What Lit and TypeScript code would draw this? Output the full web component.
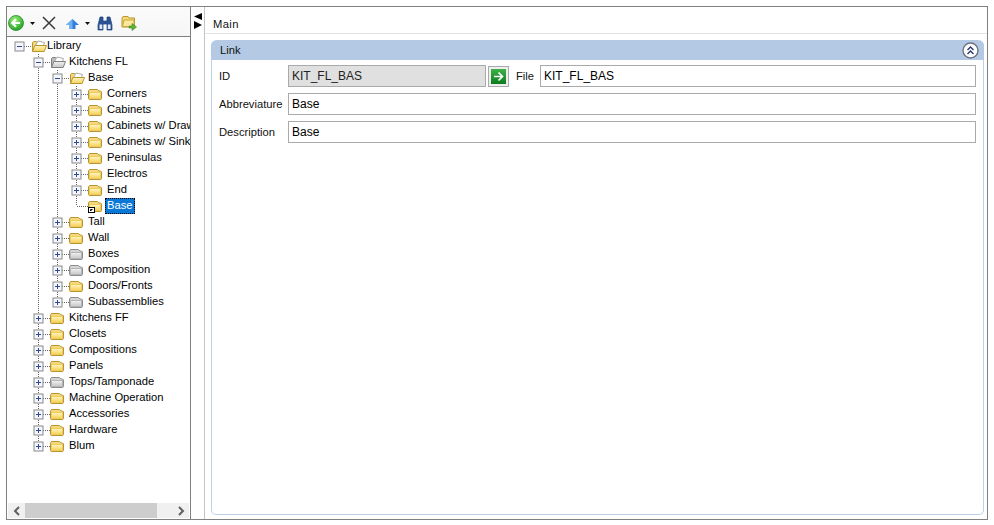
import { LitElement, html, css, svg } from "lit";
import { customElement } from "lit/decorators.js";

type Row = { d: number; t: string; s: "open" | "closed" | "leaf"; g?: boolean; sel?: boolean; last?: boolean };

const rows: Row[] = [
  { d: 0, t: "Library", s: "open" },
  { d: 1, t: "Kitchens FL", s: "open", g: true },
  { d: 2, t: "Base", s: "open" },
  { d: 3, t: "Corners", s: "closed" },
  { d: 3, t: "Cabinets", s: "closed" },
  { d: 3, t: "Cabinets w/ Drawers", s: "closed" },
  { d: 3, t: "Cabinets w/ Sinks", s: "closed" },
  { d: 3, t: "Peninsulas", s: "closed" },
  { d: 3, t: "Electros", s: "closed" },
  { d: 3, t: "End", s: "closed" },
  { d: 3, t: "Base", s: "leaf", sel: true, last: true },
  { d: 2, t: "Tall", s: "closed" },
  { d: 2, t: "Wall", s: "closed" },
  { d: 2, t: "Boxes", s: "closed", g: true },
  { d: 2, t: "Composition", s: "closed", g: true },
  { d: 2, t: "Doors/Fronts", s: "closed" },
  { d: 2, t: "Subassemblies", s: "closed", g: true, last: true },
  { d: 1, t: "Kitchens FF", s: "closed" },
  { d: 1, t: "Closets", s: "closed" },
  { d: 1, t: "Compositions", s: "closed" },
  { d: 1, t: "Panels", s: "closed" },
  { d: 1, t: "Tops/Tamponade", s: "closed", g: true },
  { d: 1, t: "Machine Operation", s: "closed" },
  { d: 1, t: "Accessories", s: "closed" },
  { d: 1, t: "Hardware", s: "closed" },
  { d: 1, t: "Blum", s: "closed", last: true },
];

const V = (y1: number, y2: number) =>
  svg`<line x1="9.5" x2="9.5" y1=${y1} y2=${y2} stroke="#666" stroke-dasharray="1 1"/>`;

const closedFolder = (g?: boolean) => {
  const edge = g ? "#8e8e8e" : "#b8952f";
  const back = g ? "#d4d4d4" : "#f4d97f";
  const front = g ? "url(#fg)" : "url(#fy)";
  return svg`<path d="M.5 12.500V5L1.500 3.500H9.500L11 5H12.500L13.500 6V12.500L12.800 13.500H1.200z" fill=${back} stroke=${edge}/>
  <path d="M1.500 12.500V6.500H12.500V12.500z" fill=${front} stroke=${g ? "#b5b5b5" : "#edcb5e"}/>`;
};

const openFolder = (g?: boolean) => {
  const edge = g ? "#7f7f7f" : "#b8952f";
  return svg`<path d="M1.500 13.500V4.500l1-1h3l1 1h2" fill=${g ? "#bbb" : "#f2d77e"} stroke=${edge}/>
  <path d="M4 8.500 7 3l6.500 1.500L12 9z" fill="#fff" stroke="#aaa"/>
  <path d="M1.500 13.500 3.800 7.500h11.700l-2.300 6z" fill=${g ? "url(#fg)" : "url(#fy)"} stroke=${edge}/>`;
};

@customElement("app-root")
export class AppRoot extends LitElement {
  static styles = css`
    :host { display: block; width: 994px; height: 525px; background: #fff; font: 11.2px "Liberation Sans", Arial, sans-serif; color: #000; overflow: hidden; }
    * { box-sizing: border-box; }
    .page { padding: 6px 6px 5px 6px; height: 525px; }
    .frame { display: flex; width: 982px; height: 514px; border: 1px solid #808080; }
    .left { display: flex; flex-direction: column; width: 184px; flex: none; border-right: 1px solid #808080; }
    .toolbar { display: flex; align-items: center; height: 30px; flex: none; padding: 3px 0 0 1px; border-bottom: 1px solid #808080; background: linear-gradient(#fbfbfb, #f6f6f6); }
    .toolbar svg { display: block; flex: none; }
    .tree { flex: 1; min-height: 0; overflow: hidden; padding: 1px 0 0 3px; }
    .row { display: flex; align-items: center; height: 16px; white-space: nowrap; }
    .row svg { display: block; flex: none; }
    .folder { width: 16px; height: 16px; }
    .label { line-height: 15px; padding: 0 2px 1px; margin-left: 1px; height: 16px; }
    .label.root { margin-left: -2px; }
    .label.sel { background: #0a78d7; color: #fff; outline: 1px dotted #000; outline-offset: -1px; }
    .scroll { display: flex; align-items: center; flex: none; height: 15px; margin: 0 0 1px 1px; width: 181px; background: #f0f0f0; }
    .scroll .btn { width: 17px; height: 15px; display: flex; align-items: center; justify-content: center; flex: none; }
    .scroll .thumb { width: 132px; height: 15px; background: #cdcdcd; flex: none; }
    .scroll .space { flex: 1; }
    .split { width: 14px; flex: none; border-right: 1px solid #c4c4c4; padding: 6px 0 0 2px; }
    .split svg { display: block; }
    .main { flex: 1; min-width: 0; display: flex; flex-direction: column; }
    .tab { height: 27px; flex: none; border-bottom: 1px solid #e3e3e3; padding: 0 0 0 8px; line-height: 35px; letter-spacing: .4px; color: #111; }
    .panel { flex: 1; min-height: 0; margin: 6px 3px 4px 6px; border: 1px solid #bcd2ea; border-top: 0; border-radius: 6px 6px 5px 5px; display: flex; flex-direction: column; }
    .phead { height: 20px; flex: none; margin: 0 -1px; background: #b4cae4; border-radius: 6px 6px 0 0; display: flex; align-items: center; justify-content: space-between; padding: 0 5px 0 9px; color: #111; }
    .collapse { width: 17px; height: 17px; display: block; }
    .form { display: grid; grid-template-columns: 69px 1fr; row-gap: 6px; padding: 5px 7px 0 7px; align-items: center; }
    .line { display: flex; align-items: center; }
    .lbl { color: #111; }
    input { font: 12px "Liberation Sans", Arial, sans-serif; color: #000; height: 22px; border: 1px solid #aaa; padding: 0 3px; width: 100%; margin: 0; background: #fff; outline: none; border-radius: 0; min-width: 0; }
    input.ro { background: #e0e0e0; width: 198px; flex: none; color: #222; }
    .go { width: 21px; height: 21px; flex: none; margin-left: 2px; border: 1px solid #aaa; background: #eee; display: flex; align-items: center; justify-content: center; padding: 0; }
    .file { margin: 0 6px 0 7px; flex: none; }
    .x { margin-left: -1px; }
    .up { margin-left: 10px; margin-top: 1px; }
    .caret2 { margin-left: 0; }
    .bino { margin-left: -1px; }
    .fold { margin-left: 8px; }
  `;

  private renderCell(r: Row, i: number) {
    const cells = [];
    for (let k = 0; k < r.d; k++) {
      const active = k === 0 ? false : this.hasLater(i, k);
      cells.push(svg`<svg width="19" height="16">${active ? V(0, 16) : ""}</svg>`);
    }
    const cont = r.d > 0 && !r.last;
    cells.push(html`<svg width="21" height="16">
      ${r.d > 0 ? V(0, cont ? 16 : 8) : ""}
      <line x1=${r.s === "leaf" ? 10 : 14} x2="21" y1="8.5" y2="8.5" stroke="#666" stroke-dasharray="1 1"/>
      ${r.s !== "leaf"
        ? svg`<rect x="5" y="4" width="9" height="9" fill="#f4f6fb" stroke="#8a8a8a"/>
          <line x1="7" x2="12" y1="8.500" y2="8.500" stroke="#2a4a9a"/>
          ${r.s === "closed" ? svg`<line x1="9.500" x2="9.500" y1="6" y2="11" stroke="#2a4a9a"/>` : ""}`
        : ""}
    </svg>`);
    return cells;
  }

  private hasLater(i: number, level: number) {
    for (let j = i + 1; j < rows.length; j++) {
      if (rows[j].d < level) return false;
      if (rows[j].d === level) return true;
    }
    return false;
  }

  private renderRow(r: Row, i: number) {
    return html`<div class="row">
      ${this.renderCell(r, i)}
      <svg class="folder" viewBox="0 0 16 16">
        ${r.s === "open" ? openFolder(r.g) : closedFolder(r.g)}
        ${r.s === "leaf"
          ? svg`<rect x=".5" y="9.500" width="6" height="5" fill="#fff" stroke="#000"/>
                <path d="M2.500 13v-1.500h1.500M2.500 13l2-2" fill="none" stroke="#000"/>`
          : ""}
      </svg>
      <span class="label ${i === 0 ? "root" : ""} ${r.sel ? "sel" : ""}">${r.t}</span>
    </div>`;
  }

  render() {
    return html`<div class="page"><div class="frame">
      <svg width="0" height="0" style="display:block">
        <defs>
          <linearGradient id="fy" x1="0" y1="0" x2="0" y2="1"><stop offset="0" stop-color="#fff6c8"/><stop offset="1" stop-color="#f6d055"/></linearGradient>
          <linearGradient id="fg" x1="0" y1="0" x2="0" y2="1"><stop offset="0" stop-color="#f2f2f2"/><stop offset="1" stop-color="#c6c6c6"/></linearGradient>
        </defs>
      </svg>
      <div class="left">
        <div class="toolbar">${this.renderToolbar()}</div>
        <div class="tree">${rows.map((r, i) => this.renderRow(r, i))}</div>
        <div class="scroll">
          <div class="btn"><svg width="8" height="10" viewBox="0 0 8 10"><path d="M6 1 2 5l4 4" fill="none" stroke="#606060" stroke-width="2"/></svg></div>
          <div class="thumb"></div>
          <div class="space"></div>
          <div class="btn"><svg width="8" height="10" viewBox="0 0 8 10"><path d="M2 1l4 4-4 4" fill="none" stroke="#606060" stroke-width="2"/></svg></div>
        </div>
      </div>
      <div class="split">
        <svg width="9" height="17" viewBox="0 0 9 17"><path d="M9 0V7L1 3.500zM1 8v8L9 12z" fill="#000"/></svg>
      </div>
      <div class="main">
        <div class="tab">Main</div>
        <div class="panel">
          <div class="phead"><span>Link</span>
            <svg class="collapse" viewBox="0 0 17 17">
              <circle cx="8.500" cy="8.500" r="7.500" fill="#fff" stroke="#6e7480" stroke-width="1.400"/>
              <path d="M5.500 8 8.500 5l3 3M5.500 12 8.500 9l3 3" fill="none" stroke="#26386b" stroke-width="1.400"/>
            </svg>
          </div>
          <div class="form">
            <span class="lbl">ID</span>
            <div class="line">
              <input class="ro" readonly .value=${"KIT_FL_BAS"} />
              <div class="go"><svg width="15" height="15" viewBox="0 0 15 15">
                <defs><linearGradient id="gb" x1="0" y1="0" x2="0" y2="1"><stop offset="0" stop-color="#3eb24a"/><stop offset="1" stop-color="#0c7c1e"/></linearGradient></defs>
                <rect width="15" height="15" fill="url(#gb)"/>
                <path d="M3 7.500h8M7.500 3.500l4 4-4 4" fill="none" stroke="#fff" stroke-width="1.700"/>
              </svg></div>
              <span class="file lbl">File</span>
              <input .value=${"KIT_FL_BAS"} />
            </div>
            <span class="lbl">Abbreviature</span>
            <input .value=${"Base"} />
            <span class="lbl">Description</span>
            <input .value=${"Base"} />
          </div>
        </div>
      </div>
    </div></div>`;
  }

  private renderToolbar() {
    return html`
      <svg width="16" height="16" viewBox="0 0 16 16">
        <defs><radialGradient id="gc" cx=".4" cy=".3" r=".8"><stop offset="0" stop-color="#9ff07a"/><stop offset="1" stop-color="#129a18"/></radialGradient></defs>
        <circle cx="8" cy="8" r="7.500" fill="url(#gc)" stroke="#2a8c30" stroke-width=".8"/>
        <path d="M12 8H5M8 4.300 4.300 8 8 11.700" fill="none" stroke="#fff" stroke-width="2.200"/>
      </svg>
      <svg width="19" height="16" viewBox="0 0 19 16"><path d="M6 7h5l-2.500 3z" fill="#111"/></svg>
      <svg class="x" width="14" height="14" viewBox="0 0 14 14"><path d="M1 1l12 12M13 1 1 13" stroke="#3a3a3a" stroke-width="1.500" fill="none"/></svg>
      <svg class="up" width="13" height="10" viewBox="0 0 13 10"><path d="M6.500 0 13 6H9.500V10H3.500V6H0z" fill="#2f7fdc"/><path d="M6.500 0 0 6H3.500V10H6.500z" fill="#6fb0f0"/></svg>
      <svg class="caret2" width="19" height="16" viewBox="0 0 19 16"><path d="M6 7h5l-2.500 3z" fill="#111"/></svg>
      <svg class="bino" width="16" height="15" viewBox="0 0 16 15">
        <path d="M3 1h3v4h4V1h3l2 8v5H10V8H6v6H1V9z" fill="#2a5396" stroke="#1e3f78" stroke-width=".7"/>
        <rect x="2.500" y="8.500" width="2.800" height="4.500" fill="#dfeaf8"/><rect x="10.800" y="8.500" width="2.800" height="4.500" fill="#dfeaf8"/>
      </svg>
      <svg class="fold" width="16" height="16" viewBox="0 0 16 16">
        <path d="M1 3 2 1.500h5L8 3h5.500v9H1z" fill="#f4d877" stroke="#b8952f"/>
        <path d="M3 5 13 5V11.500H1.500z" fill="#fbe89c" stroke="#c8a83c"/>
        <path d="M8 11h3V8.500l4.500 3.500-4.500 3.500V13H8z" fill="#5fb52f" stroke="#3d8020" stroke-width=".6"/>
      </svg>`;
  }
}
